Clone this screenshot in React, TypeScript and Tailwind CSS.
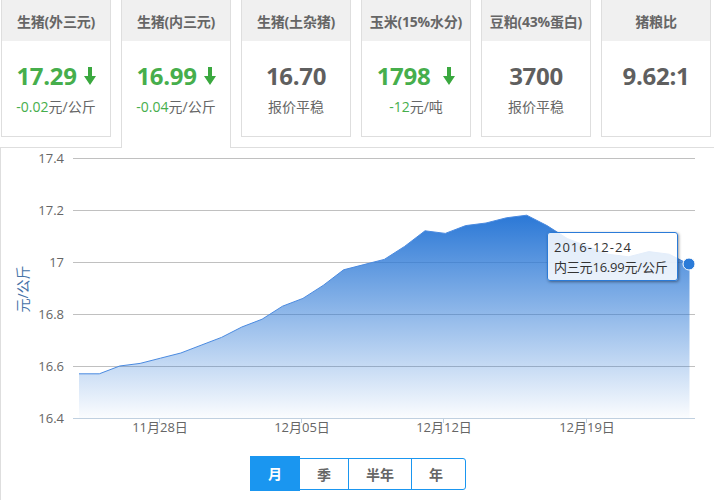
const fontStack = '"Open Sans", "Noto Sans CJK SC", sans-serif';

const cards = [
  { title: "生猪(外三元)", value: "17.29", down: true, change: "-0.02", unit: "元/公斤" },
  { title: "生猪(内三元)", value: "16.99", down: true, change: "-0.04", unit: "元/公斤", active: true },
  { title: "生猪(土杂猪)", value: "16.70", note: "报价平稳" },
  { title: "玉米(15%水分)", value: "1798", down: true, change: "-12", unit: "元/吨", gap: true },
  { title: "豆粕(43%蛋白)", value: "3700", note: "报价平稳" },
  { title: "猪粮比", value: "9.62:1" },
];

const prices = [
  16.57, 16.57, 16.6, 16.61, 16.63, 16.65, 16.68, 16.71, 16.75, 16.78, 16.83, 16.86, 16.91, 16.97, 16.99, 17.01,
  17.06, 17.12, 17.11, 17.14, 17.15, 17.17, 17.18, 17.14, 17.09, 17.06, 17.03, 17.02, 17.04, 17.03, 16.99,
];

const xAt = (i: number) => 79 + i * 20.35;
const yAt = (v: number) => 418 - (v - 16.4) * 260;
const linePoints = prices.map((p, i) => `${xAt(i).toFixed(1)},${yAt(p).toFixed(1)}`).join(" ");
const areaPoints = `79,418 ${linePoints} ${xAt(30).toFixed(1)},418`;

function DownArrow({ className }: { className?: string }) {
  return (
    <svg width="12" height="18" viewBox="0 0 12 18" className={className}>
      <path d="M4 0h4v9h4L6 18 0 9h4z" fill="#3aa83f" />
    </svg>
  );
}

function StatCard({ card }: { card: (typeof cards)[number] }) {
  // the active tab runs on down into the chart panel, so it has no bottom edge
  const frame = card.active
    ? "relative z-10 h-[148px] border-x bg-white"
    : "h-[137px] border-x border-b";
  return (
    <div className={`w-[110px] border-[#dedede] ${frame}`}>
      <div className="flex h-[41px] items-center justify-center whitespace-nowrap bg-[#f0f0f0] pt-px text-[14px] font-bold tracking-[-0.2px] text-[#666]">
        {card.title}
      </div>
      <div className="flex h-[57px] items-center justify-center pt-[12px]">
        <span className={`text-[24px] font-bold tracking-[-0.3px] ${card.down ? "text-[#46ae4c]" : "text-[#5f5f5f]"}`}>{card.value}</span>
        {card.down && <DownArrow className={card.gap ? "ml-[13px]" : "ml-[7px]"} />}
      </div>
      <div className="text-center text-[14px] leading-[18px] text-[#666]">
        {card.change && <span className="text-[#46ae4c]">{card.change}</span>}
        {card.unit}
        {card.note}
      </div>
    </div>
  );
}

function PriceChart() {
  const ticks = [17.4, 17.2, 17, 16.8, 16.6, 16.4];
  const dates = [
    { x: 160, label: "11月28日" },
    { x: 302, label: "12月05日" },
    { x: 444, label: "12月12日" },
    { x: 587, label: "12月19日" },
  ];
  return (
    <svg width="714" height="290" viewBox="0 148 714 290" className="block" style={{ fontFamily: fontStack }}>
      <defs>
        <linearGradient id="areaFill" x1="0" y1="0" x2="0" y2="1">
          <stop offset="0" stopColor="#2b78d6" />
          <stop offset="1" stopColor="#2b78d6" stopOpacity="0.02" />
        </linearGradient>
      </defs>
      {ticks.map((t) => (
        <g key={t}>
          <line x1="73" x2="695" y1={yAt(t) + 0.5} y2={yAt(t) + 0.5} stroke={t === 16.4 ? "#c0d0e0" : "#c0c0c0"} />
          <text x="64" y={yAt(t) + 5} textAnchor="end" fontSize="13" fill="#666">
            {t}
          </text>
        </g>
      ))}
      <polygon points={areaPoints} fill="url(#areaFill)" />
      <polyline points={linePoints} fill="none" stroke="#4a8ae0" strokeWidth="1" />
      {dates.map((d) => (
        <g key={d.label}>
          <line x1={d.x - 0.5} x2={d.x - 0.5} y1="418" y2="423" stroke="#c0d0e0" />
          <text x={d.x} y="432" textAnchor="middle" fontSize="13" fill="#666">
            {d.label}
          </text>
        </g>
      ))}
      <text transform="translate(28 289) rotate(-90)" fontSize="14" textAnchor="middle" fill="#4572a7">
        元/公斤
      </text>
      <circle cx="689" cy="264" r="6" fill="#2b7bd8" stroke="#fff" strokeWidth="1" />
    </svg>
  );
}

export default function App() {
  return (
    <div className="h-[500px] w-[714px] overflow-hidden bg-white" style={{ fontFamily: fontStack }}>
      <div className="flex h-[137px] items-start gap-[10px] pl-[1px]">
        {cards.map((card) => (
          <StatCard key={card.title} card={card} />
        ))}
      </div>
      <div className="mt-[10px] h-[353px] border-l border-t border-[#dedede]">
        <div className="-ml-px">
          <PriceChart />
        </div>
        <div className="ml-[249px] mt-[20px] flex">
          <div className="relative flex h-[32px] w-[216px] items-center rounded-r-[3px] border border-[#1a96f0] text-[14px] font-bold text-[#666]">
            <div className="absolute -left-px -top-[3px] flex h-[35px] w-[50px] items-center justify-center bg-[#1a96f0] text-white">月</div>
            <div className="ml-[49px] flex h-full w-[49px] items-center justify-center border-r border-[#1a96f0]">季</div>
            <div className="flex h-full w-[63px] items-center justify-center border-r border-[#1a96f0]">半年</div>
            <div className="flex h-full flex-1 items-center justify-center pr-[5px]">年</div>
          </div>
        </div>
      </div>
      <div className="pointer-events-none absolute left-[547px] top-[232px] h-[49px] w-[131px] rounded-[3px] border border-[#2b7bd8] bg-white/85 px-[6px] pt-[4px] text-[13px] leading-[20px] text-[#333] shadow-[1px_1px_3px_rgba(0,0,0,0.4)]">
        <div className="tracking-[1px]">2016-12-24</div>
        <div className="whitespace-nowrap tracking-[-0.2px]">内三元16.99元/公斤</div>
      </div>
    </div>
  );
}
